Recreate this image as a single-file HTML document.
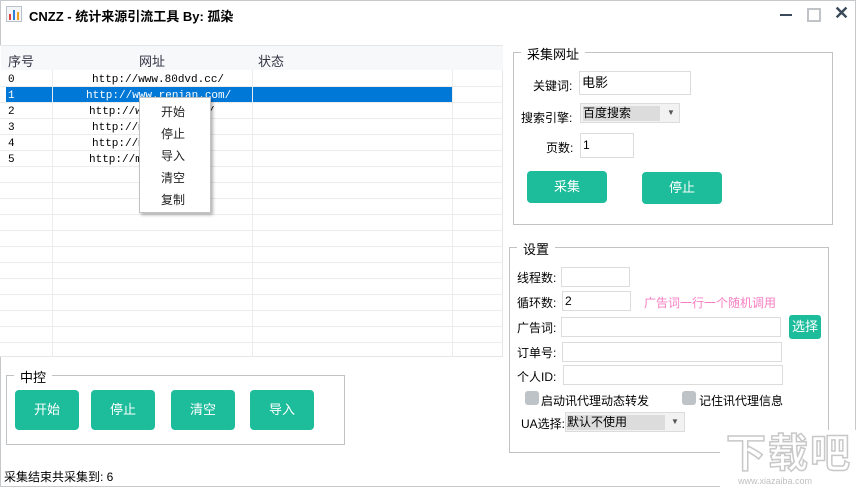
<!DOCTYPE html><html><head><meta charset="utf-8"><style>
*{margin:0;padding:0;box-sizing:border-box}
html,body{width:856px;height:487px;overflow:hidden}
body{background:#fff;position:relative;font-family:"Liberation Sans","Noto Sans CJK SC",sans-serif;font-size:12px;color:#000}
.a{position:absolute;white-space:nowrap}
.btn{position:absolute;background:#1dbc9b;color:#fff;border-radius:4px;text-align:center;font-size:13px}
.inp{position:absolute;border:1px solid #dcdcdc;background:#fff;font-size:12px;padding-left:2px}
.grp{position:absolute;border:1px solid #bfc3c6}
.lg{position:absolute;background:#fff;padding:0 6px;font-size:13px}
.mono{font-family:"Liberation Mono",monospace}
</style></head><body>
<div class="a" style="left:0;top:0;width:856px;height:487px;border:1px solid #c5c9cc"></div>
<svg class="a" style="left:6px;top:6px" width="16" height="16"><rect x="0.5" y="0.5" width="15" height="15" fill="#f3f5f7" stroke="#b9c2cc"/><rect x="3" y="8" width="2" height="6" fill="#e04040"/><rect x="7" y="4" width="2" height="10" fill="#2f7fd4"/><rect x="11" y="6" width="2" height="8" fill="#f0a020"/></svg>
<div class="a" style="left:29px;top:6px;font-size:13px;font-weight:bold">CNZZ - 统计来源引流工具 By: 孤染</div>
<div class="a" style="left:780px;top:14px;width:12px;height:2px;background:#3a4a5a"></div>
<div class="a" style="left:807px;top:8px;width:14px;height:14px;border:2px solid #c0c4c8"></div>
<div class="a" style="left:834px;top:3px;font-size:18px;font-weight:bold;color:#3a4a5a">✕</div>
<div class="a" style="left:0;top:45px;width:503px;height:312px;border-top:1px solid #e4e6e8;border-bottom:1px solid #e4e6e8;border-right:1px solid #e4e6e8;background:#fff"></div>
<div class="a" style="left:1px;top:46px;width:502px;height:24px;background:#f6f8fa"></div>
<div class="a" style="left:8px;top:51px;font-size:13px;color:#334">序号</div>
<div class="a" style="left:139px;top:51px;font-size:13px;color:#334">网址</div>
<div class="a" style="left:258px;top:51px;font-size:13px;color:#334">状态</div>
<div class="a" style="left:6px;top:87px;width:446px;height:15px;background:#0078d7"></div>
<svg class="a" style="left:0;top:70px" width="503" height="287">
<g stroke="#ececec" stroke-width="1">
<line x1="52.5" y1="0" x2="52.5" y2="287"/><line x1="252.5" y1="0" x2="252.5" y2="287"/><line x1="452.5" y1="0" x2="452.5" y2="287"/>
<line x1="0" y1="16.5" x2="503" y2="16.5"/><line x1="0" y1="32.5" x2="503" y2="32.5"/><line x1="0" y1="48.5" x2="503" y2="48.5"/><line x1="0" y1="64.5" x2="503" y2="64.5"/><line x1="0" y1="80.5" x2="503" y2="80.5"/><line x1="0" y1="96.5" x2="503" y2="96.5"/><line x1="0" y1="112.5" x2="503" y2="112.5"/><line x1="0" y1="128.5" x2="503" y2="128.5"/><line x1="0" y1="144.5" x2="503" y2="144.5"/><line x1="0" y1="160.5" x2="503" y2="160.5"/><line x1="0" y1="176.5" x2="503" y2="176.5"/><line x1="0" y1="192.5" x2="503" y2="192.5"/><line x1="0" y1="208.5" x2="503" y2="208.5"/><line x1="0" y1="224.5" x2="503" y2="224.5"/><line x1="0" y1="240.5" x2="503" y2="240.5"/><line x1="0" y1="256.5" x2="503" y2="256.5"/><line x1="0" y1="272.5" x2="503" y2="272.5"/>
</g></svg>
<div class="a mono" style="left:8px;top:72px;line-height:16px;font-size:11px">0<br><span style="color:#fff">1</span><br>2<br>3<br>4<br>5</div>
<div class="a mono" style="left:92px;top:72px;font-size:11px;line-height:16px">http://www.80dvd.cc/</div>
<div class="a mono" style="left:86px;top:88px;font-size:11px;line-height:16px;color:#fff">http://www.renian.com/</div>
<div class="a mono" style="left:89px;top:104px;font-size:11px;line-height:16px">http://ww&nbsp;&nbsp;&nbsp;&nbsp;&nbsp;&nbsp;&nbsp;&nbsp;&nbsp;/</div>
<div class="a mono" style="left:92px;top:120px;font-size:11px;line-height:16px">http://m</div>
<div class="a mono" style="left:92px;top:136px;font-size:11px;line-height:16px">http://m</div>
<div class="a mono" style="left:89px;top:152px;font-size:11px;line-height:16px">http://m.&nbsp;&nbsp;&nbsp;&nbsp;&nbsp;&nbsp;&nbsp;&nbsp;/</div>
<div class="a" style="left:139px;top:97px;width:72px;height:116px;background:#fff;border:1px solid #bfc3c6;box-shadow:2px 2px 3px rgba(0,0,0,.3);font-size:12px;line-height:22px;padding-top:3px;text-align:center;padding-right:4px;color:#222">开始<br>停止<br>导入<br>清空<br>复制</div>
<div class="grp" style="left:6px;top:375px;width:339px;height:70px"></div>
<div class="lg" style="left:14px;top:367px">中控</div>
<div class="btn" style="left:15px;top:390px;width:64px;height:40px;line-height:40px">开始</div>
<div class="btn" style="left:91px;top:390px;width:64px;height:40px;line-height:40px">停止</div>
<div class="btn" style="left:171px;top:390px;width:64px;height:40px;line-height:40px">清空</div>
<div class="btn" style="left:250px;top:390px;width:64px;height:40px;line-height:40px">导入</div>
<div class="a" style="left:4px;top:468px;font-size:12px">采集结束共采集到: 6</div>
<div class="grp" style="left:513px;top:52px;width:320px;height:173px"></div>
<div class="lg" style="left:521px;top:44px">采集网址</div>
<div class="a" style="left:533px;top:77px">关键词:</div>
<div class="inp" style="left:579px;top:71px;width:112px;height:24px;line-height:22px;font-size:13px">电影</div>
<div class="a" style="left:521px;top:109px">搜索引擎:</div>
<div class="a" style="left:580px;top:103px;width:100px;height:20px;border:1px solid #dcdcdc;background:#f2f2f2"></div>
<div class="a" style="left:583px;top:106px;width:77px;height:15px;background:#dcdcdc;font-size:12px;line-height:15px">百度搜索</div>
<div class="a" style="left:667px;top:108px;font-size:8px;color:#555">▼</div>
<div class="a" style="left:546px;top:139px">页数:</div>
<div class="inp" style="left:580px;top:133px;width:54px;height:25px;line-height:23px">1</div>
<div class="btn" style="left:527px;top:171px;width:80px;height:32px;line-height:32px">采集</div>
<div class="btn" style="left:642px;top:172px;width:80px;height:32px;line-height:32px">停止</div>
<div class="grp" style="left:509px;top:247px;width:320px;height:206px"></div>
<div class="lg" style="left:517px;top:239px">设置</div>
<div class="a" style="left:517px;top:269px">线程数:</div>
<div class="inp" style="left:561px;top:267px;width:69px;height:20px"></div>
<div class="a" style="left:517px;top:294px">循环数:</div>
<div class="inp" style="left:562px;top:291px;width:69px;height:20px;line-height:18px">2</div>
<div class="a" style="left:644px;top:294px;color:#f77dc2">广告词一行一个随机调用</div>
<div class="a" style="left:517px;top:319px">广告词:</div>
<div class="inp" style="left:561px;top:317px;width:220px;height:20px"></div>
<div class="btn" style="left:789px;top:315px;width:32px;height:24px;line-height:24px;border-radius:3px">选择</div>
<div class="a" style="left:517px;top:344px">订单号:</div>
<div class="inp" style="left:562px;top:342px;width:220px;height:20px"></div>
<div class="a" style="left:517px;top:368px">个人ID:</div>
<div class="inp" style="left:563px;top:365px;width:220px;height:20px"></div>
<div class="a" style="left:525px;top:391px;width:14px;height:14px;border-radius:3px;background:#bdc3c7"></div>
<div class="a" style="left:541px;top:392px">启动讯代理动态转发</div>
<div class="a" style="left:682px;top:391px;width:14px;height:14px;border-radius:3px;background:#bdc3c7"></div>
<div class="a" style="left:699px;top:392px">记住讯代理信息</div>
<div class="a" style="left:521px;top:415px">UA选择:</div>
<div class="a" style="left:565px;top:412px;width:120px;height:20px;border:1px solid #dcdcdc;background:#f2f2f2"></div>
<div class="a" style="left:567px;top:415px;width:98px;height:15px;background:#dcdcdc;line-height:15px">默认不使用</div>
<div class="a" style="left:671px;top:417px;font-size:8px;color:#555">▼</div>
<div class="a" style="left:720px;top:430px;width:136px;height:57px;background:#fff"></div>
<div class="a" style="left:726px;top:432px;font-size:40px;color:#fff;-webkit-text-stroke:1.5px #c8c8c8;font-weight:bold;letter-spacing:2px;line-height:44px">下载吧</div>
<div class="a" style="left:738px;top:476px;font-size:9px;color:#c0c0c0;line-height:10px">www.xiazaiba.com</div>
</body></html>
